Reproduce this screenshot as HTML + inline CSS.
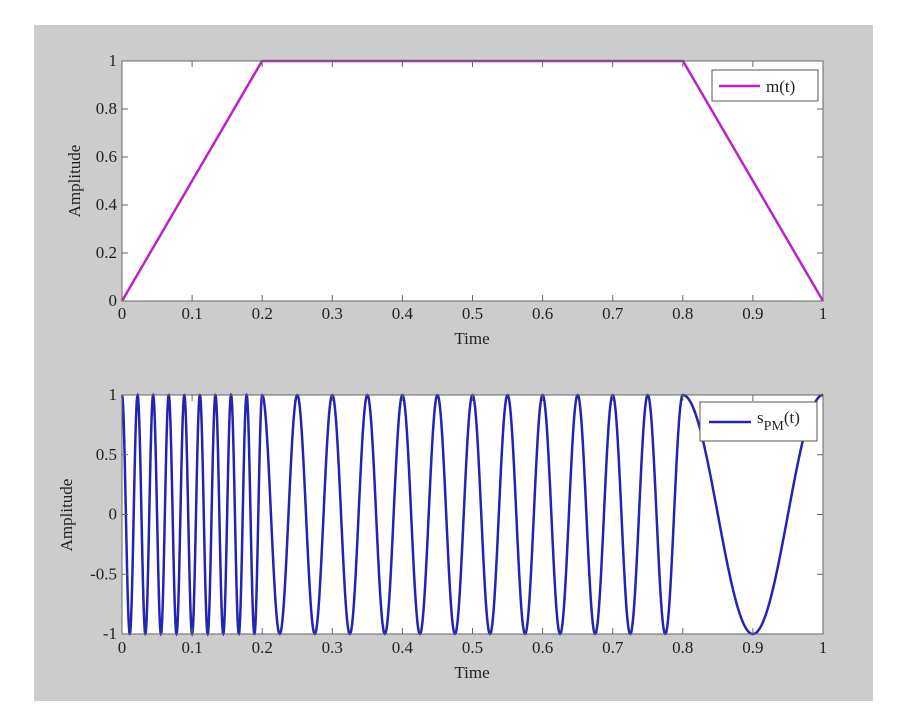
<!DOCTYPE html>
<html><head><style>
html,body{margin:0;padding:0;background:#fff;}
svg{display:block;font-family:"Liberation Serif",serif;}
</style></head><body>
<svg id="s" width="900" height="708" xmlns="http://www.w3.org/2000/svg">
<rect x="34" y="25" width="839" height="676" fill="#cccccc"/>
<rect x="122" y="61" width="701" height="240" fill="#fff"/>
<rect x="122" y="395" width="701" height="239" fill="#fff"/>
<polyline points="122,301 262,61 683,61 823,301" fill="none" stroke="#c020c8" stroke-width="2.5"/>
<polyline id="sig" fill="none" stroke="#2323b4" stroke-width="2.5"/>
<rect x="122" y="61" width="701" height="240" fill="none" stroke="#666" stroke-width="1"/>
<rect x="122" y="395" width="701" height="239" fill="none" stroke="#666" stroke-width="1"/>
<g id="ticks" stroke="#666" stroke-width="1"></g>
<g id="labels" font-size="17" fill="#222"></g>
<text x="472" y="344" font-size="17" fill="#222" text-anchor="middle">Time</text>
<text x="472" y="678" font-size="17" fill="#222" text-anchor="middle">Time</text>
<text transform="translate(80,181) rotate(-90)" font-size="17" fill="#222" text-anchor="middle">Amplitude</text>
<text transform="translate(72,515) rotate(-90)" font-size="17" fill="#222" text-anchor="middle">Amplitude</text>
<rect x="712" y="70" width="106" height="31" fill="#fff" stroke="#555"/>
<line x1="719" y1="86" x2="760" y2="86" stroke="#c020c8" stroke-width="2.5"/>
<text x="766" y="92" font-size="17" fill="#222">m(t)</text>
<rect x="700" y="402" width="117" height="39" fill="#fff" stroke="#555"/>
<line x1="709" y1="422" x2="751" y2="422" stroke="#2323b4" stroke-width="2.5"/>
<text x="757" y="423" font-size="17" fill="#222">s<tspan font-size="14" dy="7">PM</tspan><tspan font-size="17" dy="-7">(t)</tspan></text>
</svg>
<script>
var NS="http://www.w3.org/2000/svg";
function m(t){return t<0.2?t/0.2:(t<0.8?1:(1-t)/0.2);}
var pts=[];
for(var i=0;i<=4000;i++){var t=i/4000;var v=Math.cos(40*Math.PI*t+10*Math.PI*m(t));
pts.push((122+701*t).toFixed(2)+","+(514.5-119.5*v).toFixed(2));}
document.getElementById("sig").setAttribute("points",pts.join(" "));
var tk=document.getElementById("ticks"),lb=document.getElementById("labels");
function L(x1,y1,x2,y2){var l=document.createElementNS(NS,"line");l.setAttribute("x1",x1);l.setAttribute("y1",y1);l.setAttribute("x2",x2);l.setAttribute("y2",y2);tk.appendChild(l);}
function T(x,y,s,a){var e=document.createElementNS(NS,"text");e.setAttribute("x",x);e.setAttribute("y",y);e.setAttribute("text-anchor",a);e.textContent=s;lb.appendChild(e);}
var xl=["0","0.1","0.2","0.3","0.4","0.5","0.6","0.7","0.8","0.9","1"];
[[61,301,319],[395,634,653]].forEach(function(p){
for(var i=0;i<=10;i++){var x=122+70.1*i;L(x,p[1],x,p[1]-6);L(x,p[0],x,p[0]+6);T(x,p[2],xl[i],"middle");}
});
var y1=["0","0.2","0.4","0.6","0.8","1"];
for(var i=0;i<=5;i++){var y=301-48*i;L(122,y,128,y);L(823,y,817,y);T(117,y+5,y1[i],"end");}
var y2=["-1","-0.5","0","0.5","1"];
for(var i=0;i<=4;i++){var y=634-59.75*i;L(122,y,128,y);L(823,y,817,y);T(117,y+5,y2[i],"end");}
</script>
</body></html>
